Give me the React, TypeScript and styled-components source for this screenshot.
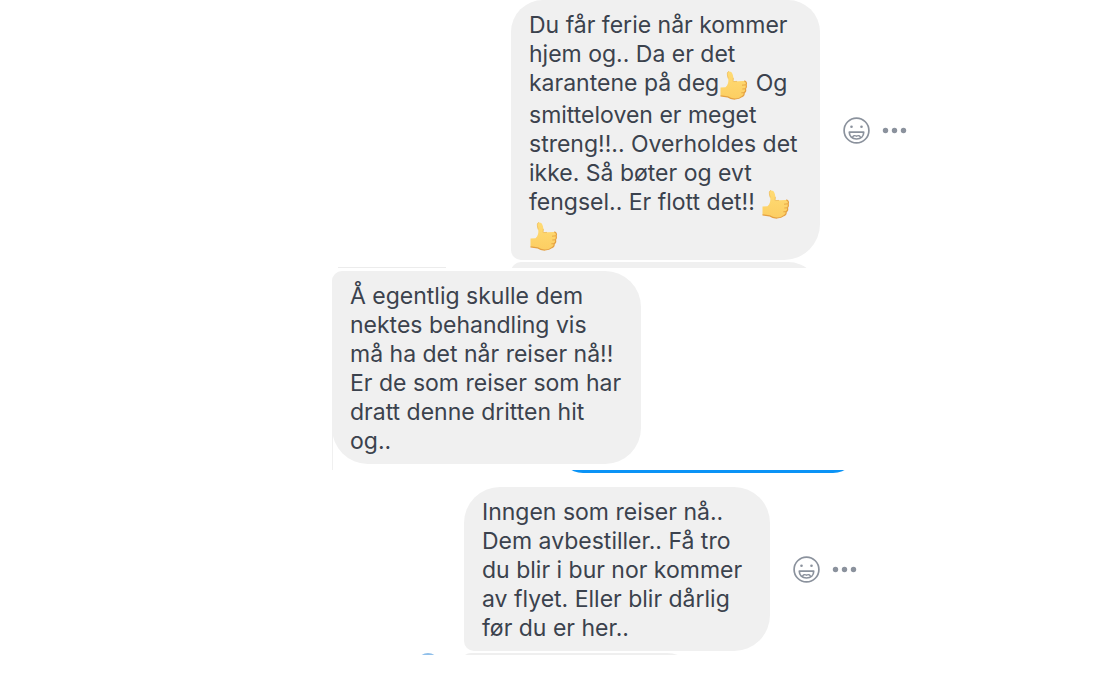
import React from "react";
import styled, { createGlobalStyle } from "styled-components";

const GlobalStyle = createGlobalStyle`
  * { box-sizing: border-box; }
  body {
    margin: 0;
    background: #ffffff;
    color: #3b424d;
    font-family: Inter, "Noto Sans", sans-serif;
    font-size: 23px;
    line-height: 29px;
  }
`;

const Thread = styled.main`
  max-width: 768px;
  margin: 0 0 0 auto;
  overflow: hidden;
`;

const Row = styled.div<{ $indent: number; $top?: number }>`
  display: flex;
  align-items: center;
  gap: 23px;
  padding-left: ${(p) => p.$indent}px;
  margin-top: ${(p) => p.$top ?? 0}px;
`;

const Bubble = styled.p<{ $radius: string; $width: number }>`
  flex: none;
  width: ${(p) => p.$width}px;
  margin: 0;
  padding: 11px 0 8px 18px;
  border-radius: ${(p) => p.$radius};
  background: #f0f0f0;
  white-space: nowrap;
`;

const Actions = styled.div`
  display: flex;
  align-items: center;
  gap: 12px;
`;

const IconButton = styled.button`
  display: flex;
  padding: 0;
  border: 0;
  background: none;
  color: #8b929d;
  cursor: pointer;
`;

const Emoji = styled.svg`
  width: 30px;
  height: 30px;
  vertical-align: -10px;
`;

const Strip = styled.div<{ $height: number; $indent: number; $top?: number; $end?: boolean }>`
  display: flex;
  align-items: ${(p) => (p.$end ? "flex-end" : "flex-start")};
  height: ${(p) => p.$height}px;
  margin-top: ${(p) => p.$top ?? 0}px;
  padding-left: ${(p) => p.$indent}px;
  overflow: hidden;
`;

const Peek = styled.div<{ $width: number; $radius: string; $color: string }>`
  flex: 0 1 ${(p) => p.$width}px;
  height: 80px;
  border-radius: ${(p) => p.$radius};
  background: ${(p) => p.$color};
`;

const Hairline = styled.div<{ $width: number }>`
  align-self: flex-end;
  flex: 0 0 ${(p) => p.$width}px;
  height: 1px;
  margin-right: 65px;
  background: #ececec;
`;

const Edge = styled.div`
  padding-bottom: 6px;
  border-top-left-radius: 10px;
  background: linear-gradient(#f0f0f0, #f0f0f0) left / 1px 100% no-repeat;
`;

const AvatarTop = styled.div`
  flex: 0 0 22px;
  height: 22px;
  margin-right: 22px;
  border-radius: 50%;
  background: #8fbfea;
`;

const Thumb = () => (
  <Emoji viewBox="0 0 30 30" role="img" aria-label="Tommel opp">
    <defs>
      <linearGradient id="skin" x1="0" y1="0" x2="0" y2="1">
        <stop offset="0" stopColor="#ffdb74" />
        <stop offset="1" stopColor="#fcce62" />
      </linearGradient>
    </defs>
    <path
      d="M1.500 16.500 L6.500 16.200 C9 14 9.800 11 9.200 7.500 C8.300 4 7.600 .8 10 .5 C13.200 .2 14.200 4 14.300 6.800 C14.400 8.500 13.900 10 14.200 10.600 L24.300 10 C26.800 9.900 28 11.800 27.200 13.800 C27.700 15.500 27.400 17 26.500 17.800 C27 19.600 26.400 21 25.200 21.600 C25.400 23.600 24.500 25 22.900 25.600 C19.500 28.600 12.700 29 8.500 25.800 L1.500 24.800 Z"
      fill="url(#skin)"
    />
    <path
      d="M1.500 24.800 L8.500 25.800 C12.700 29 19.500 28.600 22.900 25.600 C24.500 25 25.400 23.600 25.200 21.600 C26.400 21 27 19.600 26.500 17.800 C27.400 17 27.700 15.500 27.200 13.800 C28 11.800 26.800 10 25 10"
      fill="none"
      stroke="#e5a040"
      strokeWidth="1.200"
    />
    <path
      d="M23 14.200 L27.200 13.800 M23.300 18 L26.500 17.800 M22.300 21.800 L25.200 21.600"
      fill="none"
      stroke="#e9a945"
      strokeWidth="1"
    />
    <path
      d="M9.200 7.500 C8.300 4 7.600 .8 10 .5 M14.300 6.800 C14.400 8.500 13.900 10 14.200 10.600 L18 10.400"
      fill="none"
      stroke="#efbb55"
      strokeWidth=".8"
    />
  </Emoji>
);

const MessageActions = () => (
  <Actions>
    <IconButton aria-label="Reager">
      <svg width="27" height="27" viewBox="0 0 27 27" fill="none" stroke="currentColor" strokeWidth="1.700">
        <circle cx="13.500" cy="13.500" r="12.400" />
        <circle cx="8.500" cy="9.700" r="1.300" fill="currentColor" stroke="none" />
        <circle cx="18.500" cy="9.700" r="1.300" fill="currentColor" stroke="none" />
        <path d="M6.300 15.200 H20.700 C20.700 19.200 17.800 22 13.500 22 C9.200 22 6.300 19.200 6.300 15.200 Z" strokeLinejoin="round" />
        <path d="M9.300 21 C9.800 18.600 12 18 13.500 19.200 C15 18 17.200 18.600 17.700 21" strokeWidth="1.400" />
      </svg>
    </IconButton>
    <IconButton aria-label="Mer">
      <svg width="25" height="27" viewBox="0 0 25 27" fill="currentColor">
        <circle cx="3.500" cy="13.500" r="2.700" />
        <circle cx="12.500" cy="13.500" r="2.700" />
        <circle cx="21.500" cy="13.500" r="2.700" />
      </svg>
    </IconButton>
  </Actions>
);

export default function App() {
  return (
    <>
      <GlobalStyle />
      <Thread>
        <Row $indent={179}>
          <Bubble $width={309} $radius="32px 32px 36px 10px">
            Du får ferie når kommer<br />
            hjem og.. Da er det<br />
            karantene på deg<Thumb /> Og<br />
            smitteloven er meget<br />
            streng!!.. Overholdes det<br />
            ikke. Så bøter og evt<br />
            fengsel.. Er flott det!! <Thumb /><br />
            <Thumb />
          </Bubble>
          <MessageActions />
        </Row>
        <Strip $height={6} $indent={6} $top={2}>
          <Hairline $width={108} />
          <Peek $width={309} $radius="10px 32px 0 0" $color="#f0f0f0" />
        </Strip>
        <Strip $height={199} $indent={0} $top={3}>
          <Edge>
            <Bubble $width={309} $radius="10px 36px 36px 36px">
              Å egentlig skulle dem<br />
              nektes behandling vis<br />
              må ha det når reiser nå!!<br />
              Er de som reiser som har<br />
              dratt denne dritten hit<br />
              og..
            </Bubble>
          </Edge>
        </Strip>
        <Strip $height={3} $indent={227} $end>
          <Peek $width={298} $radius="0 0 24px 24px" $color="#0a93f6" />
        </Strip>
        <Row $indent={132} $top={14}>
          <Bubble $width={306} $radius="36px 36px 36px 10px">
            Inngen som reiser nå..<br />
            Dem avbestiller.. Få tro<br />
            du blir i bur nor kommer<br />
            av flyet. Eller blir dårlig<br />
            før du er her..
          </Bubble>
          <MessageActions />
        </Row>
        <Strip $height={2} $indent={85} $top={2}>
          <AvatarTop />
          <Peek $width={236} $radius="10px 30px 0 0" $color="#efefef" />
        </Strip>
      </Thread>
    </>
  );
}
